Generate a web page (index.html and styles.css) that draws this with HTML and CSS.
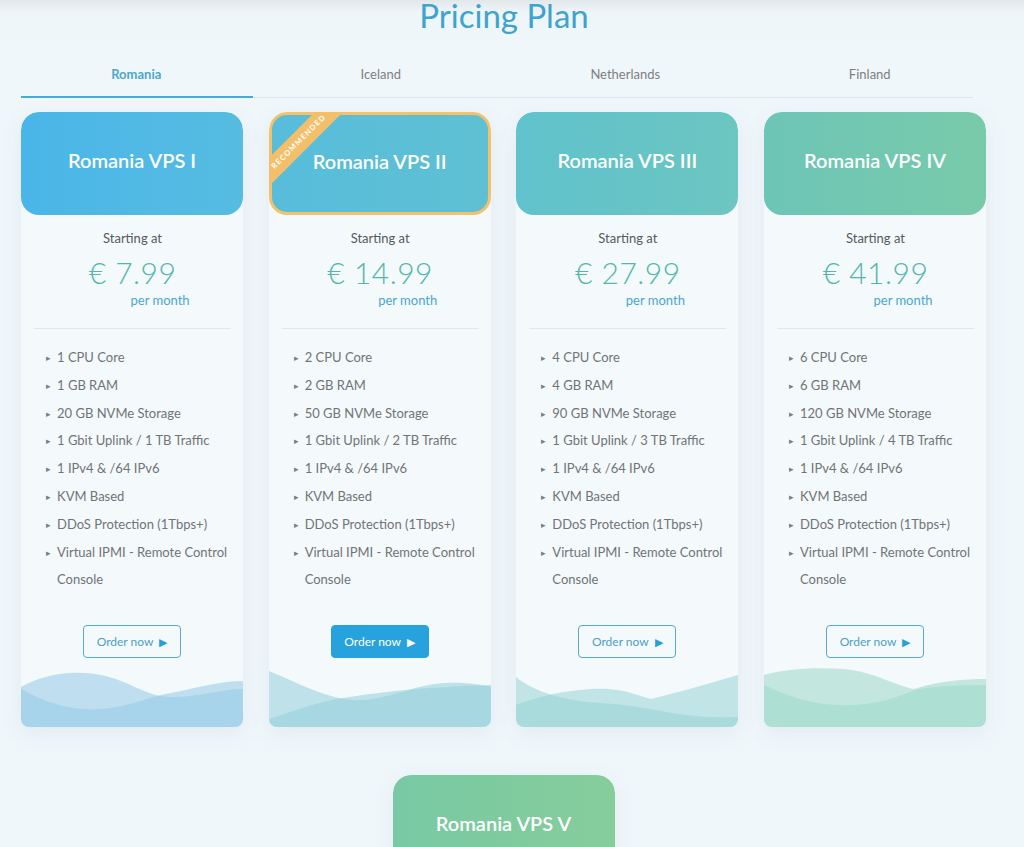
FILE: index.html
```html
<!DOCTYPE html>
<html lang="en">
<head>
<meta charset="utf-8">
<title>Pricing Plan</title>
<link rel="stylesheet" href="styles.css">
</head>
<body>
<div class="page">
  <h1 class="title">Pricing Plan</h1>
  <nav class="tabs">
    <a class="tab active">Romania</a>
    <a class="tab">Iceland</a>
    <a class="tab">Netherlands</a>
    <a class="tab">Finland</a>
  </nav>
  <div class="cards">
    <div class="card">
      <div class="card-head c1">Romania VPS I</div>
      <div class="card-body">
        <div class="starting">Starting at</div>
        <div class="price">€ 7.99</div>
        <div class="per">per month</div>
        <hr class="divider">
        <ul class="features">
          <li>1 CPU Core</li><li>1 GB RAM</li><li>20 GB NVMe Storage</li><li>1 Gbit Uplink / 1 TB Traffic</li><li>1 IPv4 &amp; /64 IPv6</li><li>KVM Based</li><li>DDoS Protection (1Tbps+)</li><li>Virtual IPMI - Remote Control Console</li>
        </ul>
        <a class="order">Order now <span class="arrow">▶</span></a>
      </div>
      <svg class="wave w1" viewBox="0 0 222 60" preserveAspectRatio="none">
        <path d="M0 20 C20 8 50 2 80 8 C110 14 125 30 150 30 C180 30 200 22 222 22 L222 60 L0 60 Z"/>
        <path d="M0 22 C25 36 50 44 80 42 C110 40 125 30 150 26 C180 20 200 14 222 14 L222 60 L0 60 Z"/>
      </svg>
    </div>
    <div class="card">
      <div class="card-head c2 recommended">
        <div class="ribbon-box"><div class="ribbon">RECOMMENDED</div></div>
        Romania VPS II
      </div>
      <div class="card-body">
        <div class="starting">Starting at</div>
        <div class="price">€ 14.99</div>
        <div class="per">per month</div>
        <hr class="divider">
        <ul class="features">
          <li>2 CPU Core</li><li>2 GB RAM</li><li>50 GB NVMe Storage</li><li>1 Gbit Uplink / 2 TB Traffic</li><li>1 IPv4 &amp; /64 IPv6</li><li>KVM Based</li><li>DDoS Protection (1Tbps+)</li><li>Virtual IPMI - Remote Control Console</li>
        </ul>
        <a class="order filled">Order now <span class="arrow">▶</span></a>
      </div>
      <svg class="wave w2" viewBox="0 0 222 60" preserveAspectRatio="none">
        <path d="M0 4 C25 14 50 28 75 32 C110 38 140 18 175 16 C200 15 212 18 222 20 L222 60 L0 60 Z"/>
        <path d="M0 52 C25 44 50 34 80 30 C120 24 160 20 222 18 L222 60 L0 60 Z"/>
      </svg>
    </div>
    <div class="card">
      <div class="card-head c3">Romania VPS III</div>
      <div class="card-body">
        <div class="starting">Starting at</div>
        <div class="price">€ 27.99</div>
        <div class="per">per month</div>
        <hr class="divider">
        <ul class="features">
          <li>4 CPU Core</li><li>4 GB RAM</li><li>90 GB NVMe Storage</li><li>1 Gbit Uplink / 3 TB Traffic</li><li>1 IPv4 &amp; /64 IPv6</li><li>KVM Based</li><li>DDoS Protection (1Tbps+)</li><li>Virtual IPMI - Remote Control Console</li>
        </ul>
        <a class="order">Order now <span class="arrow">▶</span></a>
      </div>
      <svg class="wave w3" viewBox="0 0 222 60" preserveAspectRatio="none">
        <path d="M0 10 C20 26 50 34 85 36 C120 38 140 44 170 48 C195 51 210 50 222 50 L222 60 L0 60 Z"/>
        <path d="M0 38 C20 30 45 24 75 22 C105 20 120 28 135 32 C160 26 195 16 222 8 L222 60 L0 60 Z"/>
      </svg>
    </div>
    <div class="card">
      <div class="card-head c4">Romania VPS IV</div>
      <div class="card-body">
        <div class="starting">Starting at</div>
        <div class="price">€ 41.99</div>
        <div class="per">per month</div>
        <hr class="divider">
        <ul class="features">
          <li>6 CPU Core</li><li>6 GB RAM</li><li>120 GB NVMe Storage</li><li>1 Gbit Uplink / 4 TB Traffic</li><li>1 IPv4 &amp; /64 IPv6</li><li>KVM Based</li><li>DDoS Protection (1Tbps+)</li><li>Virtual IPMI - Remote Control Console</li>
        </ul>
        <a class="order">Order now <span class="arrow">▶</span></a>
      </div>
      <svg class="wave w4" viewBox="0 0 222 60" preserveAspectRatio="none">
        <path d="M0 8 C20 2 50 0 80 2 C110 5 130 18 150 22 C175 14 200 12 222 12 L222 60 L0 60 Z"/>
        <path d="M0 18 C25 30 55 40 90 38 C125 36 140 26 155 22 C180 18 205 18 222 18 L222 60 L0 60 Z"/>
      </svg>
    </div>
    <div class="card">
      <div class="card-head c5">Romania VPS V</div>
    </div>
  </div>
</div>
</body>
</html>
```

FILE: styles.css
```css
* { box-sizing: border-box; }
html, body { margin: 0; padding: 0; }
body {
  font-family: Lato, "Open Sans", Arial, sans-serif;
  background: linear-gradient(#e2e7ea 0, #eef5f9 12px, #f0f7fb 40px);
  background-color: #f0f7fb;
  min-height: 847px;
}
.page { width: 1008px; }
.title {
  margin: 0;
  font-size: 33px;
  line-height: 31px;
  height: 33px;
  font-weight: 400;
  color: #3ea3cd;
  text-align: center;
}
.tabs {
  display: flex;
  margin: 19px 0 0 14px;
  width: 978px;
  position: relative;
}
.tabs::after {
  content: "";
  position: absolute;
  left: 7px; right: 19px; bottom: 0;
  height: 1px;
  background: #dde5e9;
}
.tab {
  flex: 1;
  height: 46px;
  line-height: 45px;
  text-align: center;
  font-size: 13px;
  color: #7d7f80;
  position: relative;
}
.tab.active { color: #4fa6cc; font-weight: 700; }
.tab.active::after {
  content: "";
  position: absolute;
  left: 7px; right: 6px; bottom: 0;
  height: 2px;
  background: #47abd2;
  z-index: 1;
}
.cards {
  display: flex;
  flex-wrap: wrap;
  justify-content: center;
  column-gap: 25.67px;
  row-gap: 48px;
  margin: 14px 0 0 21px;
  width: 965px;
}
.card {
  width: 222px;
  background: #f4f9fc;
  border-radius: 18px 18px 8px 8px;
  box-shadow: 0 6px 22px rgba(60, 90, 110, 0.08);
  display: flex;
  flex-direction: column;
  overflow: hidden;
}
.card-head {
  height: 103px;
  border-radius: 18px;
  display: flex;
  align-items: center;
  justify-content: center;
  padding-bottom: 8px;
  color: #ffffff;
  font-size: 20px;
  font-weight: 600;
  position: relative;
}
.c1 { background: linear-gradient(90deg, #4ab5e8, #56bce1); }
.c2 { background: linear-gradient(90deg, #57bddb, #5fc0d3); }
.c3 { background: linear-gradient(90deg, #60c2cd, #6cc6c1); }
.c4 { background: linear-gradient(90deg, #6dc5b7, #78caa9); }
.c5 { background: linear-gradient(90deg, #78c9a4, #86cd9b); }
.recommended { border: 3px solid #f3c26b; padding-bottom: 5px; }
.ribbon-box {
  position: absolute;
  left: -4px; top: -4px;
  width: 78px; height: 78px;
  overflow: hidden;
}
.ribbon {
  position: absolute;
  left: -29px; top: 21px;
  width: 120px; height: 20px;
  background: #f4bf6a;
  color: #ffffff;
  font-size: 7.5px;
  font-weight: 700;
  letter-spacing: 1.2px;
  line-height: 20px;
  text-align: center;
  transform: rotate(-45deg);
}
.card-body {
  padding: 14px 12px 0 13px;
  display: flex;
  flex-direction: column;
}
.starting {
  text-align: center;
  font-size: 13px;
  line-height: 18px;
  color: #555a5e;
}
.price {
  margin-top: 5px;
  text-align: center;
  font-size: 30px;
  line-height: 40px;
  font-weight: 300;
  color: #52b7aa;
  letter-spacing: 0.5px;
}
.per {
  font-size: 13px;
  line-height: 16px;
  color: #4aa6cf;
  padding-left: calc(50% - 2px);
}
.divider {
  margin: 20px 0 0 0;
  border: 0;
  height: 1px;
  background: #e0e8ec;
}
.features {
  list-style: none;
  margin: 15px 0 0 0;
  padding: 0 0 0 12px;
}
.features li {
  position: relative;
  padding-left: 11px;
  font-size: 13px;
  line-height: 27.8px;
  color: #707477;
}
.features li::before {
  content: "▸";
  position: absolute;
  left: 0; top: 0;
  font-size: 9px;
  color: #7a7e82;
}
.order {
  align-self: center;
  margin-top: 31px;
  width: 98px;
  height: 33px;
  border: 1px solid #5aa9c9;
  border-radius: 4px;
  display: flex;
  align-items: center;
  justify-content: center;
  gap: 6px;
  font-size: 12px;
  color: #4e9fc2;
  margin-left: -1px;
}
.order .arrow { font-size: 11px; color: #2a9fd8; }
.order.filled { background: #27a2dc; border-color: #27a2dc; color: #ffffff; }
.order.filled .arrow { color: #ffffff; }
.wave {
  display: block;
  width: 222px;
  height: 60px;
  margin-top: 9px;
}
.wave path { opacity: 0.55; }
.w1 path { fill: #93cbe6; }
.w2 path { fill: #93d0da; }
.w3 path { fill: #97d3d3; }
.w4 path { fill: #9ad8c6; }
```
